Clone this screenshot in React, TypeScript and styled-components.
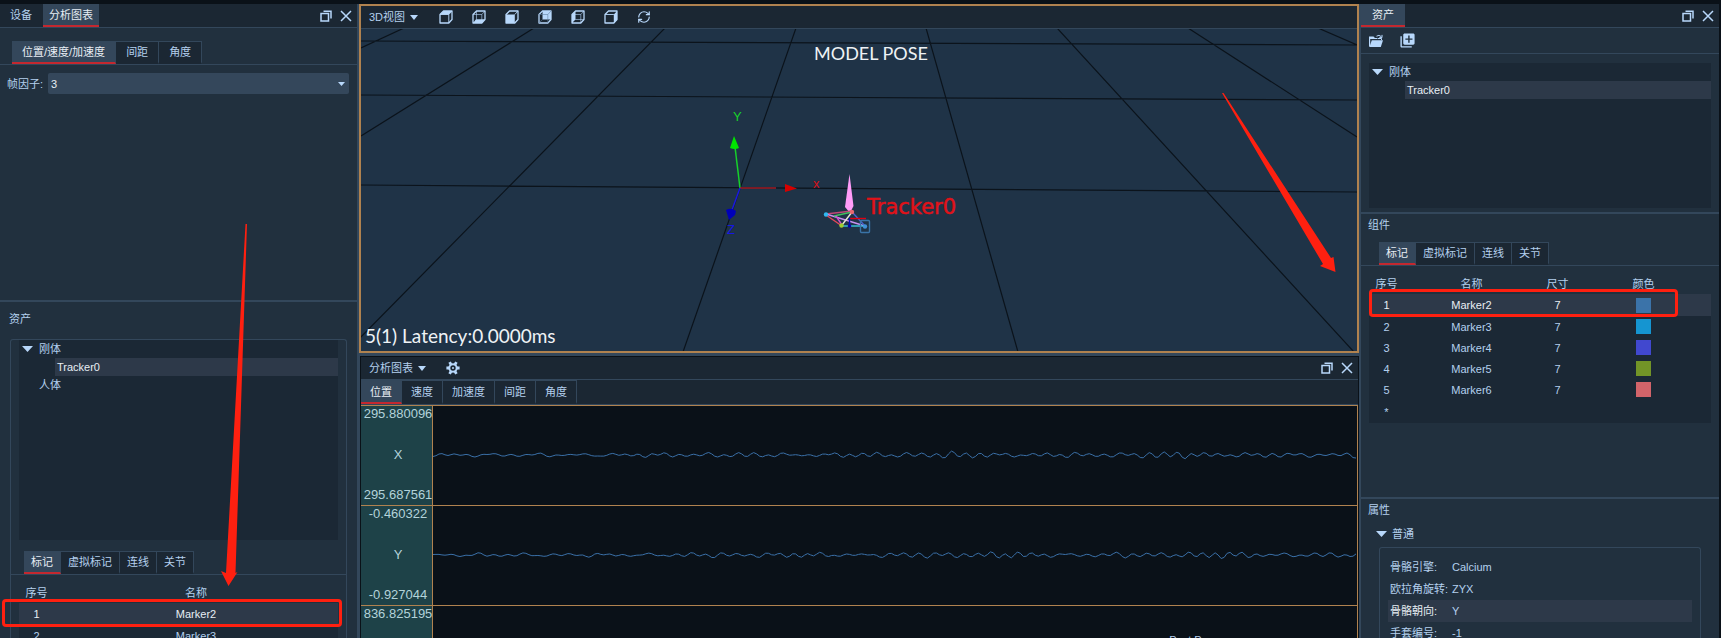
import React, { ReactNode } from 'react';
import styled, { createGlobalStyle, css } from 'styled-components';
import { RefreshCw } from 'lucide-react';
import { MdLibraryAdd } from 'react-icons/md';

const c = {
  void: '#0a1118',
  bar: '#1b2733',
  body: '#21303e',
  well: '#1b2835',
  raised: '#34475b',
  row: '#2d3949',
  line: '#33475b',
  text: '#b4d0ee',
  bright: '#e8eef4',
  icon: '#b8d8fb',
  red: '#c4282f',
  mark: '#ff2010',
  amber: '#b0824f',
  scene: '#1f3347',
  scale: '#1e4248',
  wave: '#3a70a8',
};

const GlobalStyle = createGlobalStyle`
  * { box-sizing: border-box; }
  body {
    margin: 0;
    background: ${c.void};
    color: ${c.text};
    font: 11px/18px "Liberation Sans", "Noto Sans CJK SC", sans-serif;
  }
  button, select { font: inherit; color: inherit; }
`;

const Shell = styled.main`
  display: grid;
  grid-template-columns: 359px minmax(0, 1fr) 360px;
  grid-template-rows: minmax(0, 1fr);
  height: 100vh;
  padding: 4px 2px 0 0;
  overflow: hidden;
`;

const Side = styled.section<{ $edge: 'left' | 'right' }>`
  position: relative;
  display: flex;
  flex-direction: column;
  min-height: 0;
  overflow: hidden;
  background: ${c.body};
  ${p => (p.$edge === 'left' ? 'border-right' : 'border-left')}: 2px solid ${c.line};
`;

const TitleBar = styled.header`
  display: flex;
  flex: none;
  height: 24px;
  background: ${c.bar};
  border-bottom: 1px solid ${c.line};
`;

const TitleTab = styled.button<{ $on?: boolean }>`
  padding: 0 7px;
  border: 0;
  border-bottom: 2px solid ${p => (p.$on ? c.red : 'transparent')};
  background: ${p => (p.$on ? c.raised : 'transparent')};
  color: ${p => (p.$on ? c.bright : c.text)};
`;

const DockTabs = styled.div<{ $indent: number; $gap: number; $pad: number }>`
  display: flex;
  gap: ${p => p.$gap}px;
  padding-left: ${p => p.$indent}px;
  ${TitleTab} { padding: 0 ${p => p.$pad}px; }
`;

const WindowTools = styled.div`
  display: flex;
  align-items: center;
  gap: 8px;
  margin-left: auto;
  padding-right: 5px;
`;

const IconButton = styled.button`
  display: grid;
  place-items: center;
  padding: 0;
  border: 0;
  background: none;
  color: ${c.icon};
  svg { display: block; }
`;

const TabStrip = styled.div<{ $indent: number }>`
  display: flex;
  flex: none;
  height: 24px;
  padding-left: ${p => p.$indent}px;
  border-bottom: 1px solid ${c.line};
`;

const Tab = styled.button<{ $on?: boolean; $pad?: number }>`
  padding: 0 ${p => p.$pad ?? 7}px;
  border: 1px solid ${c.line};
  border-left-width: 0;
  border-bottom: 2px solid ${p => (p.$on ? c.red : c.bar)};
  background: ${p => (p.$on ? c.raised : c.bar)};
  color: ${p => (p.$on ? c.bright : c.text)};
  white-space: nowrap;
`;

const AnalysisPane = styled.div`
  flex: none;
  height: 272px;
  padding-top: 13px;
`;

const Field = styled.label`
  display: flex;
  align-items: center;
  gap: 5px;
  padding: 8px 8px 0 7px;
  white-space: nowrap;
`;

const SelectBox = styled.span`
  display: grid;
  flex: 1;
  align-items: center;
  svg { grid-area: 1 / 1; justify-self: end; margin-right: 4px; pointer-events: none; }
`;

const Select = styled.select`
  grid-area: 1 / 1;
  appearance: none;
  width: 100%;
  height: 21px;
  padding: 0 3px;
  border: 0;
  border-radius: 2px;
  background: ${c.raised};
  color: ${c.bright};
`;

const Divider = styled.hr`
  flex: none;
  width: 100%;
  height: 2px;
  margin: 0;
  border: 0;
  background: ${c.line};
`;

const Caption = styled.h2<{ $indent: number; $top?: number }>`
  flex: none;
  margin: 0;
  padding: ${p => p.$top ?? 2}px 0 0 ${p => p.$indent}px;
  font: inherit;
`;

const GroupBox = styled.div`
  display: flex;
  flex: 1;
  flex-direction: column;
  min-height: 0;
  margin: 11px 10px 0;
  border: 1px solid ${c.line};
  border-bottom: 0;
  border-radius: 3px 3px 0 0;
  overflow: hidden;
`;

const Tree = styled.ul<{ $height: number }>`
  flex: none;
  height: ${p => p.$height}px;
  margin: 0 8px;
  padding: 0;
  background: ${c.well};
  list-style: none;
`;

const Branch = styled.li`
  display: flex;
  align-items: center;
  gap: 6px;
  height: 18px;
  padding-left: 3px;
`;

const Twist = styled.span`
  flex: none;
  width: 11px;
  line-height: 0;
`;

const Leaf = styled.li`
  height: 18px;
  margin-left: 36px;
  padding-left: 2px;
  background: ${c.row};
  color: ${c.bright};
`;

const MarkerTable = styled.table`
  width: calc(100% - 16px);
  margin: 0 8px;
  border-collapse: collapse;
  table-layout: fixed;
  text-align: center;
  th, td { padding: 0; }
  th { height: 20px; font-weight: normal; }
  tbody { background: ${c.well}; }
`;

const TableWrap = styled.div`
  flex: none;
  padding-top: 8px;
`;

const Row = styled.tr<{ $on?: boolean }>`
  height: 21px;
  ${p => p.$on && css`height: 22px; background: ${c.row}; color: ${c.bright};`}
`;

const BlankRow = styled.tr`
  height: 23px;
`;

const Col = styled.col<{ $w?: number }>`
  ${p => p.$w && `width: ${p.$w}px;`}
`;

const Swatch = styled.span<{ $fill: string }>`
  display: block;
  width: 15px;
  height: 15px;
  margin: 0 auto;
  background: ${p => p.$fill};
`;

const Middle = styled.div`
  display: grid;
  grid-template-rows: minmax(0, 349fr) minmax(0, 282fr);
  row-gap: 3px;
  min-width: 0;
  background: ${c.line};
`;

const Viewer = styled.section`
  position: relative;
  display: flex;
  flex-direction: column;
  min-height: 0;
  border: 2px solid ${c.amber};
`;

const ToolBar = styled.div<{ $gap: number }>`
  display: flex;
  flex: none;
  align-items: center;
  gap: ${p => p.$gap}px;
  height: 23px;
  padding-left: 8px;
  background: ${c.bar};
  border-bottom: 1px solid ${c.line};
`;

const MenuButton = styled.button`
  display: flex;
  align-items: center;
  gap: 5px;
  padding: 0;
  border: 0;
  background: none;
`;

const ToolSet = styled.div`
  display: flex;
  gap: 19px;
`;

const Scene = styled.div`
  position: relative;
  flex: 1;
  min-height: 0;
  overflow: hidden;
  background: ${c.scene};
`;

const SceneSvg = styled.svg`
  display: block;
  width: 100%;
  height: 100%;
`;

const SceneText = styled.div<{ $spot: 'title' | 'status' }>`
  position: absolute;
  color: #eef2f5;
  font: 18px/22px Lato, "Liberation Sans", sans-serif;
  ${p => (p.$spot === 'title'
    ? 'top: 13px; left: 24px; right: 0; text-align: center;'
    : 'bottom: 4px; left: 4px; font-size: 19px;')}
`;

const ChartDock = styled.section`
  position: relative;
  display: flex;
  flex-direction: column;
  min-height: 0;
  margin: 0 0 0 1px;
  padding: 1px 1px 0;
  overflow: hidden;
  background: ${c.void};
`;

const ChartTabs = styled.div`
  display: flex;
  flex: none;
  height: 25px;
  background: ${c.bar};
  border-bottom: 1px solid ${c.line};
`;

const ChartRow = styled.div`
  display: grid;
  flex: none;
  grid-template-columns: 72px minmax(0, 1fr);
  height: 100px;
  border-top: 1px solid ${c.amber};
  border-right: 1px solid ${c.amber};
`;

const Scale = styled.div`
  display: flex;
  flex-direction: column;
  justify-content: space-between;
  align-items: center;
  padding: 0 0 3px 3px;
  background: ${c.scale};
  border-right: 1px solid ${c.amber};
  color: #b3d3da;
  font-size: 13px;
  line-height: 15px;
`;

const Wave = styled.svg`
  display: block;
  width: 100%;
  height: 99px;
`;

const DropTip = styled.div`
  position: absolute;
  right: 125px;
  top: 278px;
  line-height: 12px;
`;

const IconBar = styled.div`
  display: flex;
  flex: none;
  align-items: center;
  gap: 15px;
  height: 26px;
  padding-left: 7px;
  border-bottom: 1px solid ${c.line};
`;

const Block = styled.div<{ $top: number; $height: number }>`
  display: flex;
  flex: none;
  flex-direction: column;
  height: ${p => p.$height}px;
  padding-top: ${p => p.$top}px;
`;

const GroupTitle = styled.div`
  display: flex;
  align-items: center;
  gap: 5px;
  padding: 6px 0 0 15px;
`;

const Properties = styled.dl`
  flex: 1;
  margin: 4px 18px 0;
  padding: 8px 8px 0;
  border: 1px solid ${c.line};
  border-bottom: 0;
  border-radius: 3px 3px 0 0;
  overflow: hidden;
`;

const Property = styled.div<{ $on?: boolean }>`
  display: grid;
  grid-template-columns: 62px 1fr;
  padding-left: 2px;
  line-height: 22px;
  white-space: nowrap;
  ${p => p.$on && css`background: ${c.row};`}
  dt { color: ${p => (p.$on ? c.bright : c.text)}; }
  dd { margin: 0; }
`;

const Callout = styled.div<{ $top: number; $left: number; $right: number }>`
  position: absolute;
  top: ${p => p.$top}px;
  left: ${p => p.$left}px;
  right: ${p => p.$right}px;
  height: 28px;
  border: 3px solid ${c.mark};
  border-radius: 4px;
  pointer-events: none;
`;

const Pointer = styled.svg<{ $side: 'left' | 'right' }>`
  position: absolute;
  top: 0;
  ${p => p.$side}: 0;
  pointer-events: none;
`;

const TabGap = styled.div<{ $size: number }>`
  flex: none;
  height: ${p => p.$size}px;
`;

const Caret = ({ w = 8, h = 5 }: { w?: number; h?: number }) => (
  <svg width={w} height={h} viewBox="0 0 8 5" preserveAspectRatio="none" aria-hidden>
    <path d="M0 0H8L4 5Z" fill={c.icon} />
  </svg>
);

const WindowButtons = () => (
  <WindowTools>
    <IconButton aria-label="还原">
      <svg width="12" height="12" viewBox="0 0 12 12" fill="none" stroke={c.icon} strokeWidth="1.5">
        <rect x="1" y="3.5" width="7.5" height="7.5" />
        <path d="M3.5 1.2H11V8.5" />
      </svg>
    </IconButton>
    <IconButton aria-label="关闭">
      <svg width="12" height="12" viewBox="0 0 12 12" fill="none" stroke={c.icon} strokeWidth="1.5">
        <path d="M1 1 11 11M11 1 1 11" />
      </svg>
    </IconButton>
  </WindowTools>
);

type Face = 'top' | 'bottom' | 'front' | 'back' | 'left' | 'right';

const faces: Record<Face, { fill: string; edges: string; label: string }> = {
  top: { fill: 'M1 4.5 4.5 1H13L9.8 4.5Z', edges: 'M1 4.5H9.8V13M9.8 4.5 13 1', label: '顶视图' },
  bottom: { fill: 'M1 13 4 9.2H13L10 13Z', edges: 'M1 4.5H9.8V13M9.8 4.5 13 1M4.5 1V9.5', label: '底视图' },
  front: { fill: 'M1 4.5H9.8V13H1Z', edges: 'M9.8 4.5 13 1', label: '前视图' },
  back: { fill: 'M4.5 1H13V9.5H4.5Z', edges: 'M1 4.5H9.8V13M9.8 4.5 13 1M1 13 4.5 9.5', label: '后视图' },
  left: { fill: 'M1 4.5 4.5 1V9.5L1 13Z', edges: 'M1 4.5H9.8V13M9.8 4.5 13 1M4.5 9.5H13', label: '左视图' },
  right: { fill: 'M9.8 4.5 13 1V9.5L9.8 13Z', edges: 'M1 4.5H9.8', label: '右视图' },
};

const Cube = ({ face }: { face: Face }) => (
  <IconButton aria-label={faces[face].label}>
    <svg width="14" height="14" viewBox="0 0 14 14" fill="none" stroke={c.icon} strokeLinejoin="round">
      <path d={faces[face].fill} fill={c.icon} stroke="none" />
      <path d="M1 4.5 4.5 1H13V9.5L9.8 13H1Z" strokeWidth="1.3" />
      <path
        d={faces[face].edges}
        strokeWidth="0.9"
        stroke={face === 'back' ? '#5f7f9f' : c.icon}
        opacity={face === 'front' || face === 'top' || face === 'right' ? 1 : 0.65}
      />
    </svg>
  </IconButton>
);

const Gear = () => (
  <svg width="14" height="14" viewBox="0 0 14 14" fill="none" stroke={c.icon} aria-hidden>
    <path d="M3.6 1.1 5 3.6M10.4 1.1 9 3.6M3.6 12.9 5 10.4M10.4 12.9 9 10.4M.4 7H3.2M10.8 7H13.6" strokeWidth="2.8" />
    <circle cx="7" cy="7" r="3.7" strokeWidth="2" />
    <circle cx="7" cy="7" r="1" fill={c.icon} stroke="none" />
  </svg>
);

const FolderOpen = () => (
  <svg width="16" height="14" viewBox="0 0 16 14" aria-hidden>
    <path d="M1 12.5V2.5H5.5L7 4H9.5V5H2.2V12.5Z" fill={c.icon} />
    <path d="M3.8 6.2H15L12.8 13H1.4Z" fill={c.icon} />
    <path d="M8.5 2.2Q11 .3 13.3 2.6M14 .9V3.6H11.3M10 4.5H13.5V6" fill="none" stroke={c.icon} strokeWidth="1" />
  </svg>
);

const StripTabs = ({ labels, indent, wide }: { labels: string[]; indent: number; wide?: number }) => (
  <TabStrip $indent={indent} role="tablist">
    {labels.map((label, i) => (
      <Tab key={label} role="tab" aria-selected={i === 0} $on={i === 0} $pad={wide}>{label}</Tab>
    ))}
  </TabStrip>
);

const AssetTree = ({ height, extra }: { height: number; extra?: ReactNode }) => (
  <Tree $height={height}>
    <Branch><Twist><Caret w={11} h={6} /></Twist>刚体</Branch>
    <Leaf>Tracker0</Leaf>
    {extra}
  </Tree>
);

const markers = [
  { name: 'Marker2', size: 7, fill: '#3b73a9' },
  { name: 'Marker3', size: 7, fill: '#1595d1' },
  { name: 'Marker4', size: 7, fill: '#4148cf' },
  { name: 'Marker5', size: 7, fill: '#729427' },
  { name: 'Marker6', size: 7, fill: '#d2646a' },
];

const Markers = ({ rows, full }: { rows: typeof markers; full?: boolean }) => (
  <MarkerTable>
    <colgroup>
      <Col $w={35} />
      <Col />
      {full && <Col $w={37} />}
      {full && <Col />}
    </colgroup>
    <thead>
      <tr>
        <th>序号</th>
        <th>名称</th>
        {full && <th>尺寸</th>}
        {full && <th>颜色</th>}
      </tr>
    </thead>
    <tbody>
      {rows.map((m, i) => (
        <Row key={m.name} $on={i === 0}>
          <td>{i + 1}</td>
          <td>{m.name}</td>
          {full && <td>{m.size}</td>}
          {full && <td><Swatch $fill={m.fill} /></td>}
        </Row>
      ))}
      {full && <BlankRow><td>*</td><td colSpan={3} /></BlankRow>}
    </tbody>
  </MarkerTable>
);

function wavePath(seed: number) {
  let d = '';
  for (let x = 0; x <= 925; x += 3) {
    const gain = 0.7 + 1.5 * Math.min(1, x / 500);
    const swell = 0.8 + 0.5 * Math.sin(x / 23 + seed) * Math.sin(x / 61 + seed * 2);
    const y =
      49 +
      Math.sin(x / 2.25 + seed + Math.sin(x / 31)) * gain * swell +
      Math.sin(x / 6.7 + seed * 2) * 0.8 +
      Math.sin(x / 3.9 + seed * 3) * 0.6;
    d += `${x ? 'L' : 'M'}${x} ${y.toFixed(1)}`;
  }
  return d;
}

const charts = [
  { axis: 'X', max: '295.880096', min: '295.687561' },
  { axis: 'Y', max: '-0.460322', min: '-0.927044' },
  { max: '836.825195' },
];

const grid = [
  'M361 41 1357 45', 'M361 95 1357 100', 'M361 185 1357 192',
  'M404 28 361 48', 'M534 28 361 136', 'M665 28 357 341', 'M796 28 683 352',
  'M926 28 1018 352', 'M1057 28 1354 352', 'M1188 28 1357 137', 'M1318 28 1357 45',
];

const properties: [string, string][] = [
  ['骨骼引擎:', 'Calcium'],
  ['欧拉角旋转:', 'ZYX'],
  ['骨骼朝向:', 'Y'],
  ['手套编号:', '-1'],
];

const AxisText = styled.text`
  font: 13px "Liberation Sans", sans-serif;
  stroke: currentColor;
  stroke-width: 0;
`;

const TrackerText = styled.text`
  font: 21px "DejaVu Sans", sans-serif;
  fill: #e01219;
  stroke: #e01219;
  stroke-width: 0.5px;
`;

const Scene3D = () => (
  <SceneSvg viewBox="361 29 996 322" preserveAspectRatio="xMidYMid slice">
    <path d={grid.join('')} stroke="#0b131b" strokeWidth="1.2" fill="none" />
    <path d="M740 188 735 147" stroke="#16d22a" strokeWidth="1.5" />
    <path d="M734 136 739 148Q735 150 730 148Z" fill="#00e400" />
    <path d="M740 188H776" stroke="#a01c26" strokeWidth="1.3" />
    <path d="M785 184 797 188.500 785 192Z" fill="#d60000" />
    <path d="M740 188 732 210" stroke="#1a1ae0" strokeWidth="1.5" />
    <path d="M726 210Q731 207 736 211L735 215 729 220Z" fill="#0000b8" />
    <AxisText x="733" y="121" fill="#18d22a">Y</AxisText>
    <AxisText x="813" y="188" fill="#d81018">x</AxisText>
    <AxisText x="727" y="234" fill="#1616e6">Z</AxisText>
    <path d="M849.500 174 853.500 206 850 213 845 207Z" fill="#ff9cf8" />
    <g fill="none" strokeWidth="1.400">
      <path d="M826 214 852 211" stroke="#c04878" />
      <path d="M826 215 842 226" stroke="#e84858" />
      <path d="M826 214 865 226" stroke="#c890f0" />
      <path d="M834 216 852 212" stroke="#40c060" />
      <path d="M836 216 842 225" stroke="#d050d0" />
      <path d="M852 212 842 225" stroke="#e8e8d8" />
      <path d="M852 212 865 226" stroke="#4a60d0" />
      <path d="M842 226H865" stroke="#38c8e0" />
      <path d="M850 218.500H866" stroke="#e00010" />
      <path d="M849.500 218V226" stroke="#0808c0" />
      <rect x="860.500" y="220.500" width="9" height="12" rx="1" stroke="#3a74a8" />
    </g>
    <circle cx="826" cy="214.500" r="2.200" fill="#30b8f0" />
    <circle cx="852" cy="212" r="2.200" fill="#e86870" />
    <circle cx="841.500" cy="225.500" r="2.200" fill="#a0cc30" />
    <circle cx="849.500" cy="226" r="1.800" fill="#0808a8" />
    <circle cx="865" cy="226.500" r="2.200" fill="#4090d8" />
    <TrackerText x="867" y="214">Tracker0</TrackerText>
  </SceneSvg>
);

export default function App() {
  return (
    <>
      <GlobalStyle />
      <Shell>
        <Side $edge="left">
          <TitleBar>
            <DockTabs $indent={4} $gap={5} $pad={6}>
              <TitleTab>设备</TitleTab>
              <TitleTab $on>分析图表</TitleTab>
            </DockTabs>
            <WindowButtons />
          </TitleBar>
          <AnalysisPane>
            <StripTabs labels={['位置/速度/加速度', '间距', '角度']} indent={12} wide={10} />
            <Field>
              帧因子:
              <SelectBox>
                <Select defaultValue="3"><option>3</option></Select>
                <Caret w={7} h={4} />
              </SelectBox>
            </Field>
          </AnalysisPane>
          <Divider />
          <Caption $indent={9} $top={8}>资产</Caption>
          <GroupBox>
            <AssetTree height={200} extra={<Branch><Twist />人体</Branch>} />
            <TabGap $size={11} />
            <StripTabs labels={['标记', '虚拟标记', '连线', '关节']} indent={13} />
            <TableWrap><Markers rows={markers.slice(0, 2)} /></TableWrap>
          </GroupBox>
          <Callout $top={595} $left={2} $right={15} />
          <Pointer $side="left" width="357" height="600" viewBox="0 4 357 600">
            <path d="M245.500 224H247L235.500 573 237.500 572 228.500 586 221 571 226 573Z" fill={c.mark} />
          </Pointer>
        </Side>

        <Middle>
          <Viewer>
            <ToolBar $gap={21}>
              <MenuButton>3D视图<Caret /></MenuButton>
              <ToolSet>
                {(Object.keys(faces) as Face[]).map(f => <Cube key={f} face={f} />)}
                <IconButton aria-label="刷新"><RefreshCw size={14} strokeWidth={2} /></IconButton>
              </ToolSet>
            </ToolBar>
            <Scene>
              <Scene3D />
              <SceneText $spot="title">MODEL POSE</SceneText>
              <SceneText $spot="status">5(1) Latency:0.0000ms</SceneText>
            </Scene>
            <Pointer $side="right" width="160" height="300" viewBox="1197 6 160 300">
              <path d="M1222 93 1223.500 93 1331 258 1333.500 257 1335.500 272 1320 266 1323 264Z" fill={c.mark} />
            </Pointer>
          </Viewer>
          <ChartDock>
            <ToolBar $gap={20}>
              <MenuButton>分析图表<Caret /></MenuButton>
              <IconButton aria-label="设置"><Gear /></IconButton>
              <WindowButtons />
            </ToolBar>
            <ChartTabs role="tablist">
              {['位置', '速度', '加速度', '间距', '角度'].map((t, i) => (
                <Tab key={t} role="tab" aria-selected={i === 0} $on={i === 0} $pad={9}>{t}</Tab>
              ))}
            </ChartTabs>
            {charts.map((ch, i) => (
              <ChartRow key={ch.max}>
                <Scale>
                  <span>{ch.max}</span>
                  {ch.axis && <span>{ch.axis}</span>}
                  {ch.min && <span>{ch.min}</span>}
                </Scale>
                <Wave viewBox="0 0 925 99" preserveAspectRatio="none">
                  <path d={wavePath(i + 1)} fill="none" stroke={c.wave} vectorEffect="non-scaling-stroke" />
                </Wave>
              </ChartRow>
            ))}
            <DropTip>Post Process</DropTip>
          </ChartDock>
        </Middle>

        <Side $edge="right">
          <TitleBar>
            <DockTabs $indent={0} $gap={0} $pad={11}>
              <TitleTab $on>资产</TitleTab>
            </DockTabs>
            <WindowButtons />
          </TitleBar>
          <IconBar>
            <IconButton aria-label="打开"><FolderOpen /></IconButton>
            <IconButton aria-label="添加"><MdLibraryAdd size={17} /></IconButton>
          </IconBar>
          <Block $top={9} $height={158}>
            <AssetTree height={145} />
          </Block>
          <Divider />
          <Block $top={0} $height={283}>
            <Caption $indent={7}>组件</Caption>
            <TabGap $size={8} />
            <StripTabs labels={['标记', '虚拟标记', '连线', '关节']} indent={18} />
            <TableWrap><Markers rows={markers} full /></TableWrap>
          </Block>
          <Divider />
          <Caption $indent={7}>属性</Caption>
          <GroupTitle><Caret w={11} h={6} />普通</GroupTitle>
          <Properties>
            {properties.map(([name, value], i) => (
              <Property key={name} $on={i === 2}>
                <dt>{name}</dt>
                <dd>{value}</dd>
              </Property>
            ))}
          </Properties>
          <Callout $top={285} $left={8} $right={41} />
        </Side>
      </Shell>
    </>
  );
}
